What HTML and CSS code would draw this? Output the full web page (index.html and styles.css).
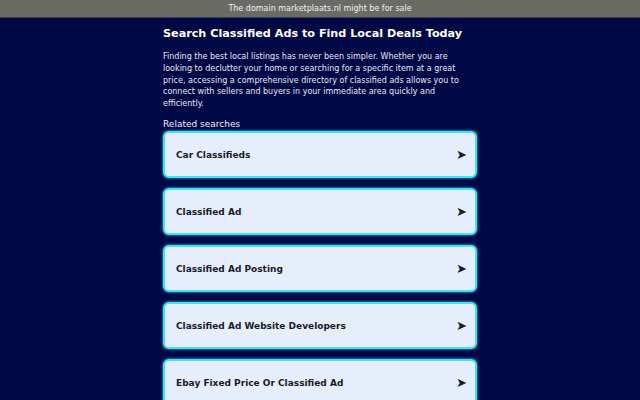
FILE: index.html
```html
<!DOCTYPE html>
<html>
<head>
<meta charset="utf-8">
<link rel="stylesheet" href="styles.css">
</head>
<body>
<div class="topbar">The domain marketplaats.nl might be for sale</div>
<main class="content">
  <h1 class="title">Search Classified Ads to Find Local Deals Today</h1>
  <p class="intro">Finding the best local listings has never been simpler. Whether you are looking to declutter your home or searching for a specific item at a great price, accessing a comprehensive directory of classified ads allows you to connect with sellers and buyers in your immediate area quickly and efficiently.</p>
  <div class="related">Related searches</div>
  <ul class="list">
    <li class="card"><span>Car Classifieds</span><span class="arrow">➤</span></li>
    <li class="card"><span>Classified Ad</span><span class="arrow">➤</span></li>
    <li class="card"><span>Classified Ad Posting</span><span class="arrow">➤</span></li>
    <li class="card"><span>Classified Ad Website Developers</span><span class="arrow">➤</span></li>
    <li class="card"><span>Ebay Fixed Price Or Classified Ad</span><span class="arrow">➤</span></li>
  </ul>
</main>
</body>
</html>
```
FILE: styles.css
```css
html, body {
  margin: 0;
  padding: 0;
}
body {
  background: #010846;
  font-family: "DejaVu Sans", sans-serif;
  color: #e8e8f4;
  overflow: hidden;
  height: 400px;
}
.topbar {
  background: #6b6b66;
  color: #f2f2f2;
  font-size: 8px;
  height: 17px;
  line-height: 17px;
  text-align: center;
  border-bottom: 1px solid #3a3a50;
}
.content {
  width: 314px;
  margin: 0 auto;
  padding-top: 7px;
}
.title {
  font-size: 11.2px;
  font-weight: bold;
  color: #ffffff;
  margin: 0 0 8px 0;
  line-height: 18px;
  white-space: nowrap;
}
.intro {
  font-size: 8px;
  line-height: 11.8px;
  margin: 0 0 8px 0;
  color: #e6e6f2;
}
.related {
  font-size: 9px;
  line-height: 12px;
  color: #f0f0f8;
  margin-bottom: 1px;
}
.list {
  list-style: none;
  margin: 0;
  padding: 0;
  display: flex;
  flex-direction: column;
  gap: 10px;
}
.card {
  box-sizing: border-box;
  height: 47px;
  border: 2px solid #3fe3f2;
  border-radius: 6px;
  background: #e6eefc;
  box-shadow: 0 0 3px #3fe3f2;
  display: flex;
  align-items: center;
  justify-content: space-between;
  padding: 1px 8px 0 11px;
  font-size: 9px;
  font-weight: bold;
  color: #1a1a2a;
}
.arrow {
  font-size: 13px;
  color: #1a1a2a;
  font-weight: normal;
}
```
